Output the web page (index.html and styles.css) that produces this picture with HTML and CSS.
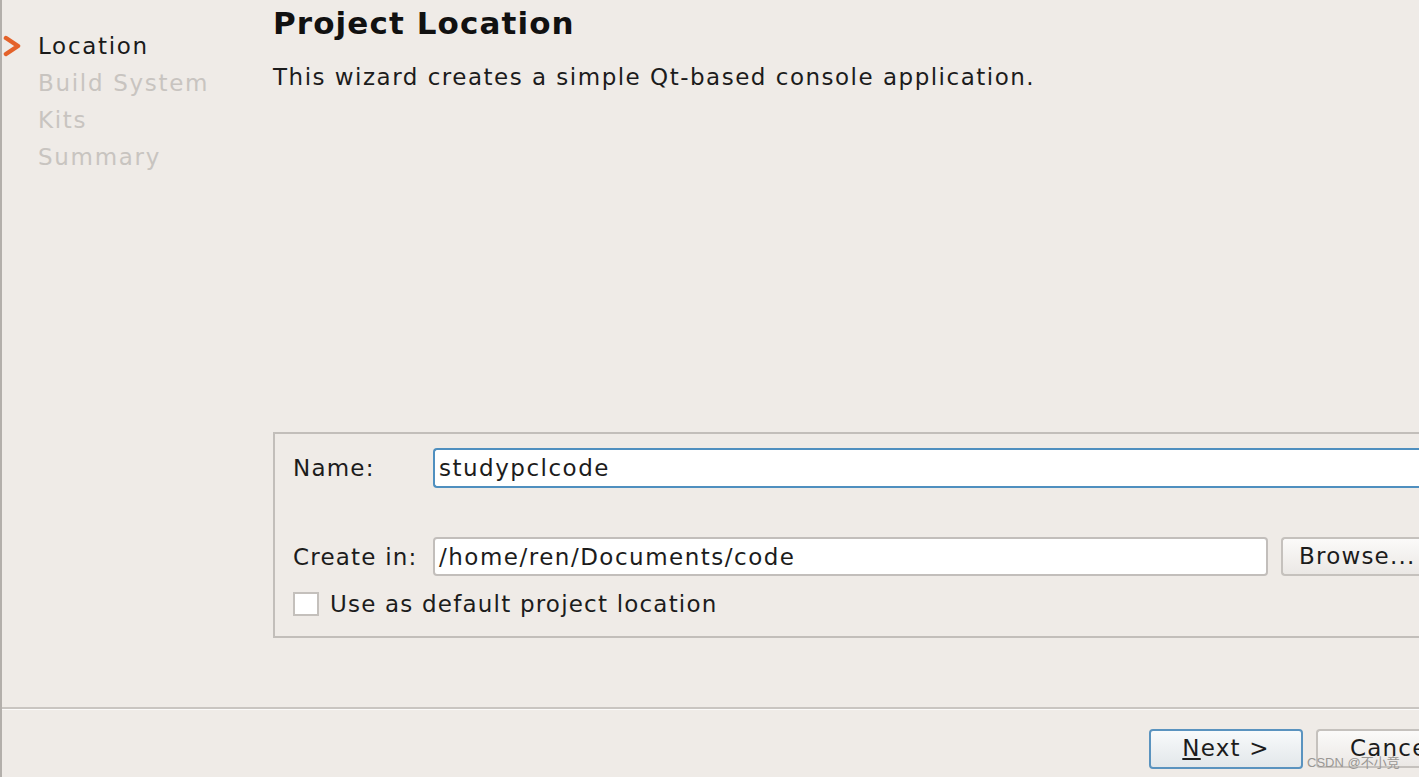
FILE: index.html
```html
<!DOCTYPE html>
<html>
<head>
<meta charset="utf-8">
<link rel="stylesheet" href="styles.css">
</head>
<body>
<div class="window">
  <div class="main">
    <nav class="steps">
      <div class="step active">
        <svg class="arrow" width="20" height="22" viewBox="0 0 20 22"><path d="M4 3 L16 11 L4 19" fill="none" stroke="#e4622a" stroke-width="4.5" stroke-linecap="round" stroke-linejoin="round"/></svg>
        <span>Location</span>
      </div>
      <div class="step">Build System</div>
      <div class="step">Kits</div>
      <div class="step">Summary</div>
    </nav>
    <section class="page">
      <h1 class="title">Project Location</h1>
      <p class="subtitle">This wizard creates a simple Qt-based console application.</p>
      <div class="spacer"></div>
      <div class="group">
        <div class="row name-row">
          <label class="label">Name:</label>
          <div class="input focused">studypclcode</div>
        </div>
        <div class="row create-row">
          <label class="label">Create in:</label>
          <div class="input path">/home/ren/Documents/code</div>
          <div class="button browse">Browse...</div>
        </div>
        <div class="check-row">
          <span class="checkbox"></span>
          <span>Use as default project location</span>
        </div>
      </div>
    </section>
  </div>
  <footer class="footer">
    <div class="button next"><u>N</u>ext &gt;</div>
    <div class="button cancel">Cancel</div>
    <span class="watermark">CSDN @不小竞</span>
  </footer>
</div>
</body>
</html>
```
FILE: styles.css
```css
html, body {
  margin: 0;
  padding: 0;
  height: 100%;
  overflow: hidden;
}
body {
  background: #efebe7;
  font-family: "DejaVu Sans", "Noto Sans CJK SC", sans-serif;
  color: #1c1c1c;
}
.window {
  height: 777px;
  border-left: 2px solid #b3afab;
  display: flex;
  flex-direction: column;
  box-sizing: border-box;
}
.main {
  display: flex;
  height: 707px;
  border-bottom: 2px solid #c9c5c1;
  box-sizing: content-box;
}
.steps {
  width: 271px;
  flex: none;
  padding-top: 28px;
}
.step {
  height: 37px;
  line-height: 37px;
  font-size: 23px;
  letter-spacing: 1.7px;
  padding-left: 36px;
  color: #c8c4c0;
  position: relative;
}
.step.active {
  color: #1a1a1a;
}
.arrow {
  position: absolute;
  left: 0;
  top: 7px;
}
.page {
  flex: 1;
  display: flex;
  flex-direction: column;
  min-width: 0;
}
.title {
  margin: 0;
  font-size: 31px;
  font-weight: bold;
  line-height: 46px;
  letter-spacing: 1.1px;
  color: #111;
}
.subtitle {
  margin: 15px 0 0;
  font-size: 23px;
  line-height: 32px;
  letter-spacing: 1.5px;
  color: #1c1c1c;
}
.spacer {
  height: 327px;
}
.group {
  margin-top: 12px;
  border: 2px solid #c2beba;
  border-right: none;
  height: 206px;
  box-sizing: border-box;
  padding: 14px 0 0 18px;
}
.row {
  display: flex;
  align-items: center;
}
.label {
  width: 140px;
  font-size: 23px;
  letter-spacing: 1.2px;
  flex: none;
}
.input {
  height: 40px;
  box-sizing: border-box;
  background: #fff;
  border: 2px solid #c2bebb;
  border-radius: 4px;
  font-size: 23px;
  letter-spacing: 1.5px;
  line-height: 36px;
  padding-left: 4px;
}
.input.focused {
  flex: 1;
  border-color: #4f8fbf;
  border-right: none;
  border-radius: 4px 0 0 4px;
}
.create-row {
  margin-top: 49px;
}
.input.path {
  width: 835px;
  height: 39px;
}
.button {
  height: 39px;
  box-sizing: border-box;
  border: 2px solid #c5c1bd;
  border-radius: 4px;
  background: linear-gradient(#fbfaf9, #ebe8e5);
  font-size: 23px;
  letter-spacing: 1.2px;
  line-height: 35px;
  color: #1c1c1c;
}
.browse {
  margin-left: 13px;
  flex: 1;
  border-right: none;
  border-radius: 4px 0 0 4px;
  padding-left: 16px;
  white-space: nowrap;
  overflow: hidden;
}
.check-row {
  display: flex;
  align-items: center;
  margin-top: 15px;
  font-size: 23px;
  letter-spacing: 1.2px;
}
.checkbox {
  width: 26px;
  height: 24px;
  box-sizing: border-box;
  background: #fff;
  border: 2px solid #c4c0bc;
  margin-right: 11px;
}
.footer {
  flex: 1;
  border-top: 1px solid #fbfaf9;
  display: flex;
  align-items: flex-start;
  padding: 19px 0 0 1147px;
  position: relative;
  overflow: hidden;
}
.next {
  flex: none;
  width: 154px;
  height: 40px;
  text-align: center;
  border-color: #5a93bf;
  background: linear-gradient(#f8fafb, #e2e7ea);
}
.cancel {
  margin-left: 13px;
  width: 120px;
  padding-left: 32px;
  flex: none;
  overflow: hidden;
  white-space: nowrap;
  border-right: none;
}
.watermark {
  position: absolute;
  left: 1305px;
  top: 42px;
  font-family: "Liberation Sans", "Noto Sans CJK SC", sans-serif;
  font-size: 13px;
  color: #9a9794;
  letter-spacing: 0;
}
```
